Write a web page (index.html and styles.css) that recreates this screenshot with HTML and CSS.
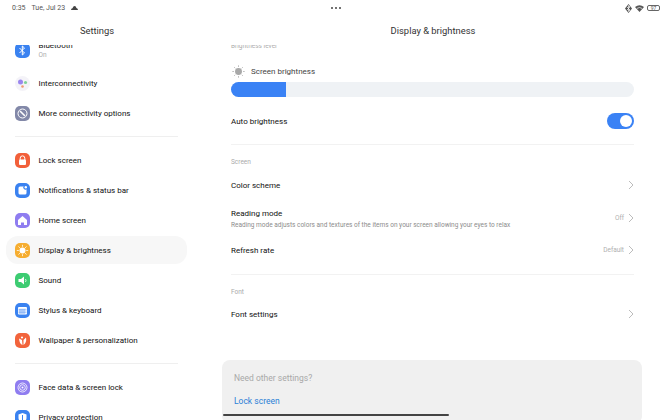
FILE: index.html
```html
<!DOCTYPE html>
<html lang="en">
<head>
<meta charset="utf-8">
<title>Display &amp; brightness</title>
<link rel="stylesheet" href="styles.css">
</head>
<body>
<div class="screen">
  <header class="status">
    <div class="status-left">
      <span>0:35</span><span>Tue, Jul 23</span>
      <svg class="cloud" width="7" height="4" viewBox="0 0 7 4"><path d="M0 4 Q0 2.4 1.5 2.3 Q2.2 0 3.7 0 Q5 .2 5.4 2.1 Q7 2.4 7 4Z" fill="#444"/></svg>
    </div>
    <div class="status-dots"><i></i><i></i><i></i></div>
    <div class="status-right">
      <svg width="7" height="9" viewBox="0 0 7 9"><path d="M3.5 0 7 4.5 3.5 9 0 4.5Z" fill="#555"/><path d="M2 3l3 3-1.500 1.500V1.500L5 3 2 6" stroke="#fff" stroke-width=".7" fill="none"/></svg>
      <svg width="9" height="7" viewBox="0 0 9 7"><path d="M0 2 Q4.500-1.500 9 2L4.500 7Z" fill="#555"/><path d="M2 3.400Q4.500 1.600 7 3.400" stroke="#fff" stroke-width=".7" fill="none"/></svg>
      <span class="battery">97</span>
    </div>
  </header>
  <div class="panes">
    <aside class="side">
      <h1 class="title">Settings</h1>
      <div class="side-list">
        <div class="side-row first"><span class="ico blue"><svg viewBox="0 0 15 15"><path d="M4.500 5l5 5-2.200 2V3l2.200 2-5 5" stroke="#fff" stroke-width="1" fill="none"/></svg></span><div><div>Bluetooth</div><div class="on">On</div></div></div>
        <div class="side-row"><span class="ico pale"><svg viewBox="0 0 15 15"><circle cx="5.500" cy="6" r="2.500" fill="#9a86ee"/><circle cx="10.500" cy="6.500" r="1.600" fill="#7fd29a"/><circle cx="7.500" cy="10.500" r="1.300" fill="#ef9a72"/></svg></span>Interconnectivity</div>
        <div class="side-row"><span class="ico slate"><svg viewBox="0 0 15 15"><circle cx="7.500" cy="7.500" r="4.500" fill="none" stroke="#fff" stroke-width="1"/><path d="M5 5l5 5" stroke="#fff" stroke-width="1.600"/></svg></span>More connectivity options</div>
        <hr class="side-rule">
        <div class="side-row"><span class="ico red"><svg viewBox="0 0 15 15"><path d="M5.200 7V5.200a2.300 2.300 0 0 1 4.600 0V7" fill="none" stroke="#fff"/><rect x="4" y="6.500" width="7" height="5.500" rx="1" fill="#fff"/></svg></span>Lock screen</div>
        <div class="side-row"><span class="ico blue"><svg viewBox="0 0 15 15"><rect x="3.500" y="3.500" width="8" height="8" rx="1.500" fill="#fff"/><circle cx="10.500" cy="4.500" r="1.800" fill="#3a82f0" stroke="#3a82f0"/><circle cx="10.800" cy="4.200" r="1.200" fill="#fff"/></svg></span>Notifications &amp; status bar</div>
        <div class="side-row"><span class="ico violet"><svg viewBox="0 0 15 15"><path d="M7.500 3 12 7v5H9V9.500H6V12H3V7Z" fill="#fff"/></svg></span>Home screen</div>
        <div class="side-row active"><span class="ico amber"><svg viewBox="0 0 15 15"><circle cx="7.500" cy="7.500" r="3" fill="#fff"/><path d="M7.500 1.800v2M7.500 11.200v2M1.800 7.500h2M11.200 7.500h2M3.500 3.500l1.400 1.400M10.100 10.100l1.400 1.400M3.500 11.500l1.400-1.400M10.100 4.900l1.400-1.400" stroke="#fff" stroke-width=".8"/></svg></span>Display &amp; brightness</div>
        <div class="side-row"><span class="ico green"><svg viewBox="0 0 15 15"><path d="M3.500 6H6l3-2.500v8L6 9H3.500Z" fill="#fff"/><path d="M10.500 6q1 1.500 0 3" stroke="#fff" fill="none" stroke-width=".8"/></svg></span>Sound</div>
        <div class="side-row"><span class="ico blue"><svg viewBox="0 0 15 15"><rect x="3" y="4" width="9" height="7.500" rx="1" fill="#fff"/><path d="M3.500 6.300h8M3.500 8h8M3.500 9.700h8M5 6v5M7 6v5M9 6v5" stroke="#3a82f0" stroke-width=".5"/></svg></span>Stylus &amp; keyboard</div>
        <div class="side-row"><span class="ico orange"><svg viewBox="0 0 15 15"><path d="M4 5.500 7 7l.5 5Q4.500 11 4 5.500Z" fill="#fff"/><path d="M8.500 7l2.500-2.500Q12 9 8.500 12Z" fill="#fff"/><circle cx="7" cy="4.500" r="1.100" fill="#fff"/></svg></span>Wallpaper &amp; personalization</div>
        <hr class="side-rule">
        <div class="side-row"><span class="ico violet"><svg viewBox="0 0 15 15"><circle cx="7.500" cy="7.500" r="4.500" fill="none" stroke="#fff" stroke-width=".8"/><circle cx="7.500" cy="7.500" r="2.800" fill="none" stroke="#fff" stroke-width=".8"/><circle cx="7.500" cy="7.500" r="1" fill="#fff"/></svg></span>Face data &amp; screen lock</div>
        <div class="side-row"><span class="ico blue"><svg viewBox="0 0 15 15"><path d="M7.500 3 11.500 4.500V8Q11.500 11 7.500 13 3.500 11 3.500 8V4.500Z" fill="#fff"/><path d="M7.500 5v5" stroke="#3a82f0"/></svg></span>Privacy protection</div>
      </div>
    </aside>
    <main class="main">
      <h2 class="title">Display &amp; brightness</h2>
      <div class="main-list">
        <div class="label clipped">Brightness level</div>
        <div class="bright-head">
          <svg width="13" height="13" viewBox="0 0 12 12"><circle cx="6" cy="6" r="3.200" fill="#a8a8a8"/><path d="M6 .3v1.500M6 10.200v1.500M.3 6h1.500M10.200 6h1.500M2 2l1 1M9 9l1 1M2 10l1-1M9 3l1-1" stroke="#a8a8a8" stroke-width=".7"/></svg>
          Screen brightness
        </div>
        <div class="slider"><div class="slider-fill"></div></div>
        <div class="row auto"><span class="name">Auto brightness</span><span class="toggle"></span></div>
        <hr class="rule">
        <div class="label">Screen</div>
        <div class="row scheme"><span class="name">Color scheme</span><svg class="chev" viewBox="0 0 6 10"><path d="M1 1l4 4-4 4" /></svg></div>
        <div class="row reading"><div><div class="name">Reading mode</div><div class="sub">Reading mode adjusts colors and textures of the items on your screen allowing your eyes to relax</div></div><span class="end"><span class="val">Off</span><svg class="chev" viewBox="0 0 6 10"><path d="M1 1l4 4-4 4" /></svg></span></div>
        <div class="row refresh"><span class="name">Refresh rate</span><span class="end"><span class="val">Default</span><svg class="chev" viewBox="0 0 6 10"><path d="M1 1l4 4-4 4" /></svg></span></div>
        <hr class="rule">
        <div class="label">Font</div>
        <div class="row font"><span class="name">Font settings</span><svg class="chev" viewBox="0 0 6 10"><path d="M1 1l4 4-4 4" /></svg></div>
      </div>
    </main>
  </div>
  <div class="sheet">
    <div class="sheet-q">Need other settings?</div>
    <div class="sheet-link">Lock screen</div>
  </div>
  <div class="home-bar"></div>
</div>
</body>
</html>
```

FILE: styles.css
```css
* { box-sizing: border-box; }
html, body { margin: 0; padding: 0; background: #fff; }
body { font-family: Roboto, "Liberation Sans", sans-serif; }
.screen { position: relative; width: 672px; height: 420px; overflow: hidden; color: #222; display: flex; flex-direction: column; }

.status { height: 14px; margin-top: 1px; padding: 0 12px; display: flex; align-items: center; justify-content: space-between; font-size: 7px; color: #555; position: relative; }
.status-left { display: flex; align-items: center; gap: 6px; }
.status-dots { position: absolute; left: 331px; top: 6px; display: flex; gap: 2px; }
.status-dots i { width: 2px; height: 2px; border-radius: 50%; background: #444; }
.status-right { display: flex; align-items: center; gap: 3px; }
.battery { width: 13px; height: 6px; border: .7px solid #666; border-radius: 2px; font-size: 5px; line-height: 5px; text-align: center; }

.panes { flex: 1; display: flex; min-height: 0; }
.side { width: 194px; flex: none; display: flex; flex-direction: column; min-height: 0; }
.main { flex: 1; display: flex; flex-direction: column; min-height: 0; }
.title { margin: 0; height: 30px; padding-top: 9px; font-size: 9.400px; line-height: 14px; font-weight: 400; text-align: center; color: #333; flex: none; }

.side-list { flex: 1; overflow: hidden; padding: 0 7px 0 6px; font-size: 8px; font-weight: 400; color: #111; }
.side-row { height: 30px; display: flex; align-items: center; gap: 8.500px; padding-left: 9px; }
.side-row.first { margin-top: -9.500px; margin-bottom: 2.500px; }
.side-row.active { background: #f7f7f7; border-radius: 12px; height: 28px; margin: 1px 0; }
.on { font-size: 6.500px; font-weight: 400; color: #aaa; line-height: 10px; }
.ico { width: 15px; height: 15px; border-radius: 5px; flex: none; display: block; }
.ico svg { display: block; width: 15px; height: 15px; }
.blue { background: #3a82f0; }
.pale { background: #f4f3f8; border-radius: 50%; }
.slate { background: #8288a8; }
.red { background: #f2603a; }
.violet { background: #8f7df0; }
.amber { background: #f6ad30; }
.green { background: #3dcc72; }
.orange { background: #f2643c; }
.side-rule { border: 0; height: 1px; background: #efefef; margin: 8px 9px 8px 9px; }

.main-list { flex: 1; overflow: hidden; padding: 0 38px 0 37px; }
.label { font-size: 6.500px; line-height: 8px; color: #aaa; height: 8px; }
.clipped { margin-top: -3px; }
.bright-head { display: flex; align-items: center; gap: 6px; margin-top: 14px; height: 14px; font-size: 8px; color: #444; padding-left: 1px; }
.slider { margin-top: 4px; height: 15px; background: #eff2f5; border-radius: 7.500px; overflow: hidden; }
.slider-fill { width: 55px; height: 100%; background: #3a82f5; }
.row { display: flex; align-items: center; justify-content: space-between; }
.name { font-size: 8px; font-weight: 400; color: #111; line-height: 11px; }
.auto { height: 16px; margin-top: 16px; }
.toggle { position: relative; width: 27px; height: 16px; border-radius: 8px; background: #3a82f5; display: block; }
.toggle::after { content: ""; position: absolute; right: 2px; top: 2px; width: 12px; height: 12px; border-radius: 50%; background: #fff; }
.rule { border: 0; height: 1px; background: #f2f2f2; margin: 0; }
.auto + .rule { margin-top: 15px; }
.rule + .label { margin-top: 13px; }
.scheme { height: 14px; margin-top: 12px; }
.reading { height: 23px; margin-top: 15px; }
.reading .end { margin-bottom: 2px; }
.sub { font-size: 6.500px; line-height: 9px; color: #8c8c8c; margin-top: 2px; }
.refresh { height: 14px; margin-top: 13px; }
.refresh + .rule { margin-top: 17px; }
.font { height: 14px; margin-top: 11px; }
.end { display: flex; align-items: center; gap: 4px; }
.val { font-size: 6.500px; color: #b0b0b0; }
.chev { width: 6px; height: 10px; fill: none; stroke: #b4b4b4; stroke-width: .9; display: block; }

.sheet { position: absolute; left: 222px; top: 360px; width: 420px; height: 64px; background: #f0f0f0; border-radius: 8px; padding: 12px 12px; }
.sheet-q { font-size: 8.500px; line-height: 11px; color: #a8a8a8; padding-top: .5px; }
.sheet-link { font-size: 8.500px; line-height: 11px; margin-top: 12.500px; color: #2b7fd6; }
.home-bar { position: absolute; left: 223px; top: 414px; width: 226px; height: 2px; background: #444; border-radius: 1px; }
```
